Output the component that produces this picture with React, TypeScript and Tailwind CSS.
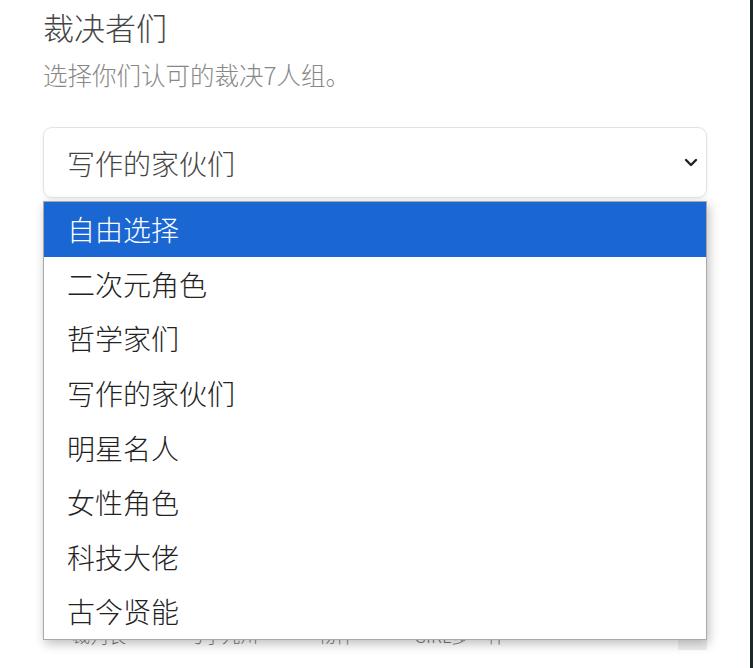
const options = ["自由选择", "二次元角色", "哲学家们", "写作的家伙们", "明星名人", "女性角色", "科技大佬", "古今贤能"];

const font = { fontFamily: '"Noto Sans CJK SC", "Noto Sans", sans-serif' };

function Chevron() {
  return (
    <svg width="14" height="9" viewBox="0 0 14 9" fill="none" className="text-[#222]">
      <path d="M2 2l5 5 5-5" stroke="currentColor" strokeWidth="2.4" strokeLinecap="round" strokeLinejoin="round" />
    </svg>
  );
}

export default function App() {
  return (
    <div className="relative h-[668px] w-[753px] overflow-hidden border-r-[3px] border-[#1f2828] bg-white font-light" style={font}>
      <div className="pl-[43px] pr-[43px]">
        <h2 className="pt-[5px] text-[31px] leading-[43px] text-[#444]">裁决者们</h2>
        <p className="mt-[11px] text-[24.5px] leading-[32px] text-[#888]">选择你们认可的裁决7人组。</p>

        <div className="mt-[36px] flex h-[71px] items-center justify-between rounded-[9px] border border-[#e3e3e6] bg-white pl-[23px] pr-[8px] shadow-[0_2px_4px_rgba(0,0,0,0.06)]">
          <span className="text-[28px] text-[#444]">写作的家伙们</span>
          <Chevron />
        </div>

        {/* list hidden under the open menu */}
        <div className="mt-[420px] flex h-[34px] items-center text-[18px] text-[#777]">
          <div className="flex flex-1 gap-[60px] pl-[29px]">
            <span>裁判长</span>
            <span>与子九州</span>
            <span>物件</span>
            <span>GIRL多一样</span>
          </div>
          <div className="flex h-[30px] w-[29px] items-start justify-center bg-[#eeeeee] text-[10px] text-[#555]">▾</div>
        </div>
      </div>

      <ul className="absolute left-[43px] top-[201px] w-[664px] border border-[#a9a9a9] bg-white shadow-[2px_4px_10px_rgba(0,0,0,0.25)]">
        {options.map((o, i) => (
          <li
            key={o}
            className={`flex h-[54.6px] items-center pl-[23px] text-[28px] ${i === 0 ? "bg-[#1a66d2] text-white" : "text-[#222]"}`}
          >
            {o}
          </li>
        ))}
      </ul>
    </div>
  );
}
